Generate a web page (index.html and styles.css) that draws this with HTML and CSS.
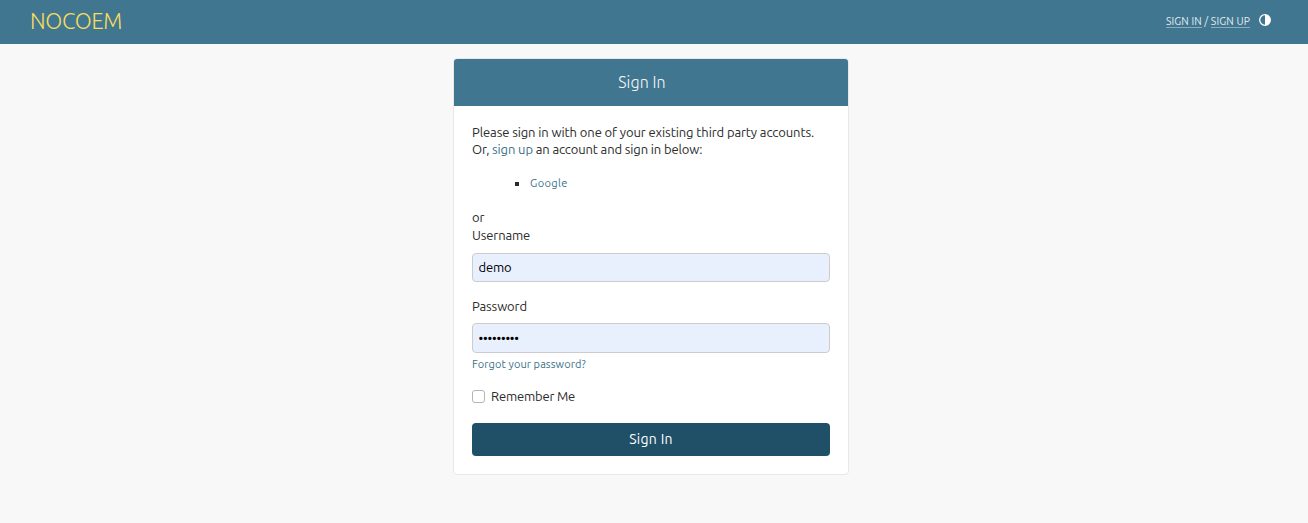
FILE: index.html
```html
<!DOCTYPE html>
<html lang="en">
<head>
<meta charset="utf-8">
<title>Sign In</title>
<link rel="stylesheet" href="styles.css">
</head>
<body>
<header class="topbar">
  <a class="brand">NOCOEM</a>
  <nav class="user-tools">
    <span class="links"><a>SIGN IN</a> / <a>SIGN UP</a></span>
    <svg class="theme-icon" viewBox="0 0 12 12" width="12" height="12"><circle cx="6" cy="6" r="5.3" fill="none" stroke="#fff" stroke-width="1.3"/><path d="M6 .7a5.3 5.3 0 0 1 0 10.6z" fill="#fff"/></svg>
  </nav>
</header>
<main class="card">
  <h1 class="card-title"><span>Sign In</span></h1>
  <form class="card-body">
    <p class="intro"><span class="intro-first">Please sign in with one of your existing third party accounts.</span><br><span class="intro-second">Or, <a>sign up</a> an account and sign in below:</span></p>
    <ul class="providers"><li><a>Google</a></li></ul>
    <div class="or">or</div>
    <label class="label username" for="user">Username</label>
    <input class="field" id="user" type="text" value="demo">
    <label class="label password" for="pass">Password</label>
    <input class="field secret" id="pass" type="password" value="demopass1">
    <a class="forgot">Forgot your password?</a>
    <label class="remember"><span class="checkbox"></span><span class="remember-text">Remember Me</span></label>
    <button class="submit" type="button">Sign In</button>
  </form>
</main>
</body>
</html>
```

FILE: styles.css
```css
* { box-sizing: border-box; }
body {
  margin: 0;
  min-height: 523px;
  background: #f8f8f8;
  color: #2b2b2b;
  font: 13px/17px Ubuntu, "Noto Sans", "Open Sans", sans-serif;
}
a { color: #3a7089; }
.topbar {
  display: flex;
  align-items: center;
  justify-content: space-between;
  height: 44px;
  padding: 0 37px 0 30px;
  background: #417690;
}
.brand {
  color: #f5dd5d;
  font-size: 22px;
  font-weight: 300;
  letter-spacing: -0.3px;
  line-height: 26px;
  margin-bottom: 2px;
}
.user-tools {
  display: flex;
  align-items: center;
  gap: 9px;
  font-size: 10.4px;
  letter-spacing: 0.15px;
  line-height: 12px;
}
.theme-icon { margin-bottom: 4px; }
.links { color: #e3ecf0; margin-bottom: 2px; }
.links a { display: inline-block; color: #e3ecf0; border-bottom: 1px solid #8dabba; }
.card {
  width: 396px;
  height: 417px;
  margin: 14px 0 0 453px;
  border: 1px solid #e8e8e8;
  border-radius: 4px;
  background: #fff;
  overflow: hidden;
}
.card-title {
  display: flex;
  align-items: center;
  justify-content: center;
  height: 47px;
  margin: 0;
  padding-right: 18px;
  background: #417690;
  color: #f5f8fa;
  font-size: 16px;
  font-weight: 300;
  letter-spacing: 0.1px;
}
.card-body {
  display: flex;
  flex-direction: column;
  align-items: flex-start;
  padding: 18px 18px 0;
}
.intro { margin: 0; white-space: nowrap; letter-spacing: -0.1px; }
.intro-second { letter-spacing: -0.13px; }
.providers {
  height: 17px;
  margin: 17px 0 0;
  padding-left: 58px;
  list-style: square;
  line-height: 17px;
}
.providers a { font-size: 11px; line-height: 11px; vertical-align: 1px; letter-spacing: 0.4px; }
.or { margin-top: 17px; }
.label { line-height: 18px; letter-spacing: -0.12px; }
.username { margin-bottom: 9px; }
.field {
  width: 358px;
  height: 29px;
  padding: 0 6px 1px 5.5px;
  border: 1px solid #ccc;
  border-radius: 4px;
  background: #e8f0fe;
  color: #000;
  font: inherit;
  letter-spacing: -0.2px;
}
.password { margin: 15px 0 8px; }
.secret { height: 30px; }
.forgot { margin-top: 3px; font-size: 11px; letter-spacing: 0.08px; }
.remember { display: flex; align-items: center; gap: 6px; margin-top: 15px; }
.remember-text { letter-spacing: -0.18px; }
.checkbox { width: 13px; height: 13px; border: 1px solid #b5b5b5; border-radius: 3px; background: #fff; }
.submit {
  width: 358px;
  height: 33px;
  margin-top: 18px;
  padding: 0;
  border: 0;
  border-radius: 4px;
  background: #205067;
  color: #fff;
  font: inherit;
  font-size: 14px;
  letter-spacing: 0.3px;
}
```
